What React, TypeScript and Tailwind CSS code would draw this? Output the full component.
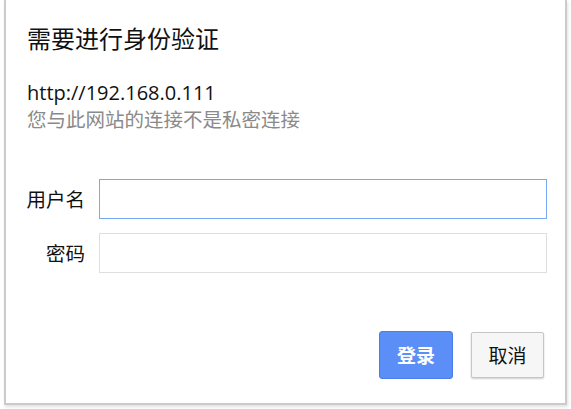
export default function App() {
    const font = { fontFamily: '"Noto Sans CJK SC", "Noto Sans", sans-serif' };

    return (
        <div className="h-[409px] w-[571px] overflow-hidden bg-white" style={font}>
            <div className="ml-[4px] flex h-[405px] w-[563px] flex-col border-x-2 border-b-2 border-[#cbcbcb] bg-white shadow-[1px_2px_3px_rgba(0,0,0,0.12)]">
                <div className="pl-[21px] pt-[21px] pr-[21px]">
                    <h1 className="text-[24px] leading-[34px] text-[#111]">
                        需要进行身份验证
                    </h1>
                    <div className="mt-[26px] font-['Open_Sans',sans-serif] text-[20px] leading-[24px] text-[#111]">
                        http://192.168.0.111
                    </div>
                    <div className="text-[19.5px] leading-[28px] text-[#8a8a8a]">
                        您与此网站的连接不是私密连接
                    </div>
                </div>

                <div className="mt-[46px] flex flex-col gap-[14px] pr-[17px]">
                    <div className="flex items-center">
                        <label className="w-[80px] pr-[1px] text-right text-[19.5px] text-[#111]">
                            用户名
                        </label>
                        <input
                            type="text"
                            className="ml-[13px] h-[40px] w-[448px] border border-[#7aa8f8] bg-white px-2 outline-none"
                        />
                    </div>
                    <div className="flex items-center">
                        <label className="w-[80px] pr-[1px] text-right text-[19.5px] text-[#111]">
                            密码
                        </label>
                        <input
                            type="password"
                            className="ml-[13px] h-[40px] w-[448px] border border-[#dedede] bg-white px-2 outline-none"
                        />
                    </div>
                </div>

                <div className="mt-auto mb-[24px] flex items-center justify-end gap-[18px] pr-[21px]">
                    <button
                        type="button"
                        className="h-[48px] w-[74px] rounded-[3px] border border-[#4a7de8] bg-[#5b8ff7] text-[19px] font-bold text-white"
                    >
                        登录
                    </button>
                    <button
                        type="button"
                        className="h-[46px] w-[73px] rounded-[2px] border border-[#c6c6c6] bg-[#f6f6f6] text-[19px] text-[#111] shadow-[0_1px_2px_rgba(0,0,0,0.2)]"
                    >
                        取消
                    </button>
                </div>
            </div>
        </div>
    );
}
